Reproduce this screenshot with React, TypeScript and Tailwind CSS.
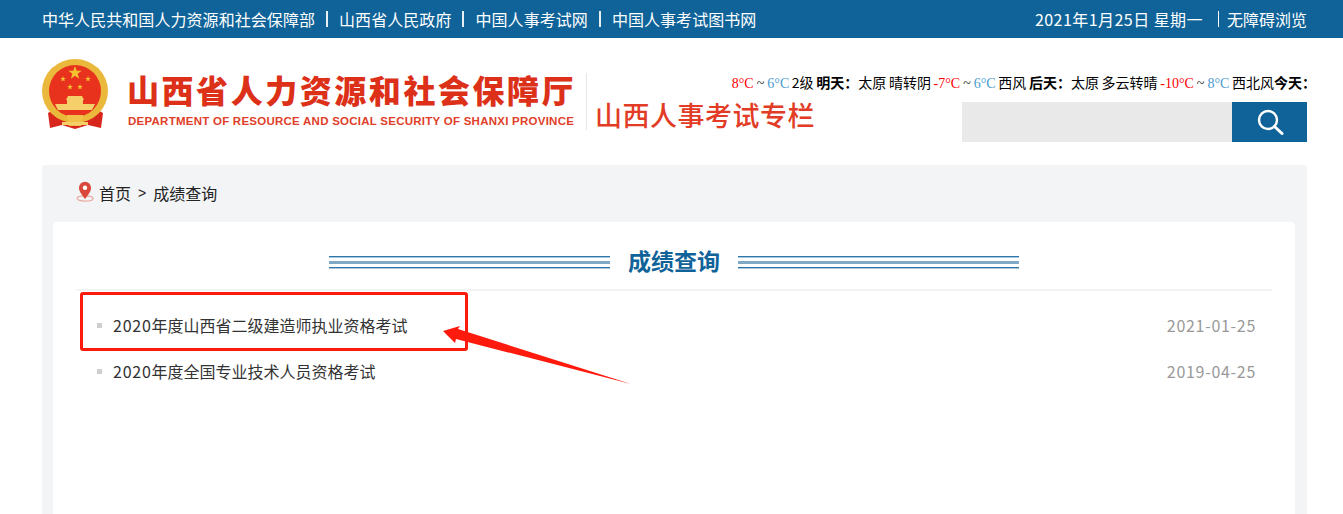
const NAV_LINKS = ['中华人民共和国人力资源和社会保障部', '山西省人民政府', '中国人事考试网', '中国人事考试图书网'];

const RESULTS = [
  { year: '2020', title: '年度山西省二级建造师执业资格考试', date: '2021-01-25' },
  { year: '2020', title: '年度全国专业技术人员资格考试', date: '2019-04-25' },
];

function Temp({ low, high }: { low: string; high: string }) {
  return (
    <span className="font-['Liberation_Serif','Noto_Sans_CJK_SC',serif]">
      <span className="text-[#ff0000]">{low}</span>
      <span className="text-[#222]"> ~ </span>
      <span className="text-[#4a9bd0]">{high}</span>
    </span>
  );
}

function Star({ x, y, r }: { x: number; y: number; r: number }) {
  const points = Array.from({ length: 10 }, (_, i) => {
    const radius = i % 2 === 0 ? r : r * 0.4;
    const angle = (Math.PI / 5) * i - Math.PI / 2;
    return `${x + radius * Math.cos(angle)},${y + radius * Math.sin(angle)}`;
  }).join(' ');
  return <polygon points={points} fill="#f2c230" />;
}

function Emblem() {
  return (
    <svg width="67" height="71" viewBox="0 0 67 71" className="shrink-0">
      <path d="M6 54 L13 50 L54 50 L61 54 L59 69 L46 66 L33 70 L20 66 L8 69 Z" fill="#d8261c" />
      <ellipse cx="33" cy="32" rx="33" ry="32" fill="#eab93c" />
      <ellipse cx="33" cy="32" rx="26" ry="26" fill="#e8321e" />
      <Star x={33} y={14} r={7} />
      <Star x={21} y={20} r={3} />
      <Star x={46} y={20} r={3} />
      <Star x={28} y={28} r={3} />
      <Star x={38} y={28} r={3} />
      <path d="M26 37 H40 L42 41 H24 Z M25 41 H41 V45 H25 Z M13 45 H53 L50 51 H16 Z" fill="#f4cf6a" />
      <path d="M14 53 Q33 66 52 53 L50 59 Q33 69 16 59 Z" fill="#eab93c" />
      <path d="M25 56 H41 L39 67 H27 Z" fill="#f0c24a" />
      <rect x="20" y="63" width="26" height="3" fill="#f4cf6a" />
    </svg>
  );
}

function SectionLines() {
  return (
    <div className="flex h-[13px] w-[281px] flex-col justify-between">
      <div className="h-[2px] bg-[#2f77a8] border-b border-[#a9c8dd]" />
      <div className="h-[3px] bg-[#7fa9c6]" />
      <div className="h-[2px] bg-[#2f77a8] border-b border-[#a9c8dd]" />
    </div>
  );
}

export default function App() {
  return (
    <div className="relative h-[514px] overflow-hidden bg-white font-['Noto_Sans_CJK_SC','Liberation_Sans',sans-serif]">
      <div className="flex h-[38px] items-center justify-between bg-[#0f6399] pl-[42px] pr-[36px] text-[16px] text-white">
        <div className="flex items-center tracking-[0.06px]">
          {NAV_LINKS.map((link, i) => (
            <span key={link} className="flex items-center">
              {i > 0 && <span className="mx-[11px] h-[16px] w-[2px] bg-white/90" />}
              {link}
            </span>
          ))}
        </div>
        <div className="flex items-center">
          <span className="tracking-[0.45px]">2021年1月25日 星期一</span>
          <span className="ml-[15px] mr-[8px] h-[16px] w-[1px] bg-white" />
          <span>无障碍浏览</span>
        </div>
      </div>

      <div className="flex h-[127px] justify-between pl-[42px] pr-[36px]">
        <div className="flex w-[690px] shrink-0 pt-[21px]">
          <Emblem />
          <div className="ml-[18px] w-[449px] shrink-0 pt-[11px]">
            <div className="whitespace-nowrap text-[32px] font-black leading-[38px] tracking-[2.55px] text-[#dc3019]">
              山西省人力资源和社会保障厅
            </div>
            <div className="mt-[6px] whitespace-nowrap pl-[1px] font-['Liberation_Sans',sans-serif] text-[11.5px] font-bold leading-[14px] tracking-[0.25px] text-[#df3f2a]">
              DEPARTMENT OF RESOURCE AND SOCIAL SECURITY OF SHANXI PROVINCE
            </div>
          </div>
          <div className="ml-[10px] mt-[14px] h-[57px] w-[1px] shrink-0 bg-[#e6e6e6]" />
          <div className="ml-[8px] mt-[39px] shrink-0 whitespace-nowrap text-[27px] font-medium leading-[34px] tracking-[0.5px] text-[#e23b26]">
            山西人事考试专栏
          </div>
        </div>

        <div className="flex w-[575px] shrink-0 flex-col items-end">
          <div className="mt-[34px] h-[20px] w-full overflow-hidden whitespace-nowrap text-right text-[14px] leading-[20px] text-black [direction:rtl] [word-spacing:-0.5px]">
            <span className="mr-[-9px] inline-block [direction:ltr]">
              <Temp low="-8°C" high="6°C" /> 2级 <b>明天：</b>太原 晴转阴 <Temp low="-7°C" high="6°C" /> 西风 <b>后天：</b>太原 多云转晴 <Temp low="-10°C" high="8°C" /> 西北风<b>今天：</b>
            </span>
          </div>
          <div className="mt-[10px] flex h-[40px] w-[345px]">
            <div className="flex-1 bg-[#e9e9e9]" />
            <div className="flex w-[75px] items-center justify-center bg-[#0f6399]">
              <svg width="28" height="28" viewBox="0 0 28 28" fill="none" stroke="white">
                <circle cx="12" cy="12" r="9" strokeWidth="2.4" />
                <path d="M18.5 18.5 L26 25.5" strokeWidth="3" strokeLinecap="round" />
              </svg>
            </div>
          </div>
        </div>
      </div>

      <div className="ml-[42px] mr-[36px] h-[400px] rounded-[4px] bg-[#f3f4f6] pl-[11px] pr-[12px]">
        <div className="flex h-[57px] items-center pb-[1px] pl-[23px] text-[16px] text-[#222]">
          <svg width="18" height="21" viewBox="0 0 18 21" className="mb-[4px] shrink-0">
            <ellipse cx="9" cy="17.5" rx="8" ry="2.6" fill="none" stroke="#eaa8a0" strokeWidth="1.2" />
            <path d="M9 18 C5 13 3 10 3 6.8 A6 6 0 0 1 15 6.8 C15 10 13 13 9 18 Z" fill="#d9483b" />
            <circle cx="9" cy="6.8" r="2.2" fill="white" />
          </svg>
          <span className="ml-[5px]">首页</span>
          <span className="mx-[7px] font-['Liberation_Sans',sans-serif] text-[14px]">&gt;</span>
          <span>成绩查询</span>
        </div>

        <div className="h-[340px] rounded-[4px] bg-white px-[23px]">
          <div className="flex h-[69px] items-center justify-center border-b-2 border-[#f3f3f3] pt-[14px]">
            <SectionLines />
            <h2 className="mx-[18px] mb-[6px] text-[23px] font-bold leading-[30px] text-[#0f6399]">成绩查询</h2>
            <SectionLines />
          </div>
          <ul className="pt-[11px]">
            {RESULTS.map((row) => (
              <li key={row.date} className="flex h-[46px] items-center justify-between pl-[21px] pr-[16px] text-[16px]">
                <span className="flex items-center text-[#333]">
                  <span className="mr-[11px] h-[5px] w-[5px] bg-[#cfcfcf]" />
                  <span>
                    <span className="tracking-[0.75px]">{row.year}</span>
                    {row.title}
                  </span>
                </span>
                <span className="tracking-[0.7px] text-[#999]">{row.date}</span>
              </li>
            ))}
          </ul>
        </div>
      </div>

      {/* annotation drawn over the page */}
      <div className="absolute left-[80px] top-[292px] h-[59px] w-[388px] rounded-[3px] border-[3px] border-[#ff1a0e]" />
      <svg width="200" height="70" viewBox="0 0 200 70" className="absolute left-[440px] top-[322px]">
        <path d="M3 9 L20 4 L18 7 L191 62 L16 17 L15 21 Z" fill="#ff1a0e" />
      </svg>
    </div>
  );
}
